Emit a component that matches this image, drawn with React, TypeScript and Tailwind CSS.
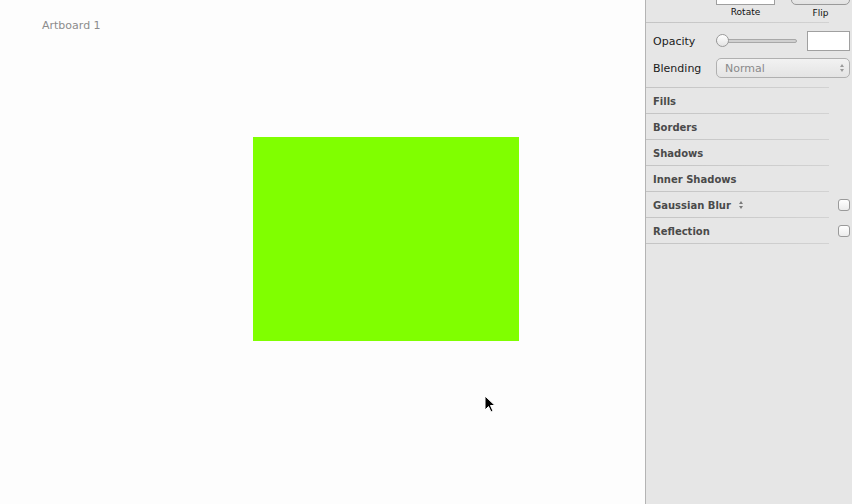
import React from "react";

const font = { fontFamily: '"DejaVu Sans", "Liberation Sans", sans-serif' };

function Sep() {
  return <div className="h-px mr-[23px] bg-gradient-to-r from-[#c4c4c4] to-[#d2d2d2]" />;
}

function Row({ label, check, arrows }: { label: string; check?: boolean; arrows?: boolean }) {
  return (
    <>
      <div className="h-[25px] flex items-center pl-[7px] pr-[2px]">
        <span className="text-[10px] font-bold text-[#4a4a4a] leading-none mt-[2px]">{label}</span>
        {arrows && (
          <svg width="6" height="10" viewBox="0 0 6 10" className="ml-[7px] mt-[1px]">
            <path d="M3 1 L5 4 L1 4 Z" fill="#7a7a7a" />
            <path d="M3 9 L5 6 L1 6 Z" fill="#7a7a7a" />
          </svg>
        )}
        <div className="flex-1" />
        {check && (
          <div className="w-[12px] h-[12px] rounded-[3px] border border-[#9a9a9a] bg-gradient-to-b from-[#ffffff] to-[#ececec]" />
        )}
      </div>
      <Sep />
    </>
  );
}

export default function App() {
  return (
    <div className="flex w-[852px] h-[504px] overflow-hidden" style={font}>
      <div className="relative flex-1 bg-[#fdfdfd]">
        <div className="absolute left-[42px] top-[20px] text-[11px] text-[#8c8c8c] leading-none">Artboard 1</div>
        <div className="absolute left-[253px] top-[137px] w-[266px] h-[204px] bg-[#80ff00]" />
        <svg className="absolute left-[484px] top-[395px]" width="12" height="19" viewBox="0 0 12 19">
          <path d="M1 1 L1 15 L4.5 11.5 L7 17 L9 16 L6.5 10.5 L11 10.5 Z" fill="#000" stroke="#fff" strokeWidth="1" />
        </svg>
      </div>
      <div className="w-[207px] h-full bg-[#e6e6e6] border-l border-[#b4b4b4] flex flex-col">
        <div className="h-[22px] relative flex">
          <div className="ml-[70px] flex flex-col items-center w-[59px]">
            <div className="w-[59px] h-[20px] -mt-[15px] bg-white border border-[#9f9f9f]" />
            <span className="text-[9px] text-[#111] leading-none mt-[3px]">Rotate</span>
          </div>
          <div className="ml-[16px] flex flex-col items-center w-[59px]">
            <div className="w-[59px] h-[20px] -mt-[15px] rounded-[5px] bg-gradient-to-b from-[#fafafa] to-[#e2e2e2] border border-[#9a9a9a]" />
            <span className="text-[9px] text-[#111] leading-none mt-[4px]">Flip</span>
          </div>
        </div>
        <Sep />
        <div className="h-[26px] flex items-center pl-[7px] mt-[5px]">
          <span className="w-[63px] text-[11px] text-[#1a1a1a] leading-none">Opacity</span>
          <div className="relative w-[81px] h-[14px] flex items-center">
            <div className="w-full h-[4px] rounded-full bg-[#d0d0d0] border border-[#a8a8a8]" />
            <div className="absolute left-0 top-0 w-[13px] h-[13px] rounded-full bg-gradient-to-b from-white to-[#e4e4e4] border border-[#9a9a9a]" />
          </div>
          <div className="ml-[10px] w-[43px] h-[20px] bg-white border border-[#a0a0a0]" />
        </div>
        <div className="h-[26px] flex items-center pl-[7px] mt-[1px]">
          <span className="w-[63px] text-[11px] text-[#1a1a1a] leading-none">Blending</span>
          <div className="w-[134px] h-[20px] rounded-[5px] border border-[#b0b0b0] bg-gradient-to-b from-[#f2f2f2] to-[#e4e4e4] flex items-center pl-[8px] pr-[4px]">
            <span className="text-[11px] text-[#8a8a8a] leading-none flex-1">Normal</span>
            <svg width="6" height="10" viewBox="0 0 6 10">
              <path d="M3 1 L5 4 L1 4 Z" fill="#9a9a9a" />
              <path d="M3 9 L5 6 L1 6 Z" fill="#9a9a9a" />
            </svg>
          </div>
        </div>
        <div className="h-[6px]" />
        <Sep />
        <Row label="Fills" />
        <Row label="Borders" />
        <Row label="Shadows" />
        <Row label="Inner Shadows" />
        <Row label="Gaussian Blur" arrows check />
        <Row label="Reflection" check />
      </div>
    </div>
  );
}
